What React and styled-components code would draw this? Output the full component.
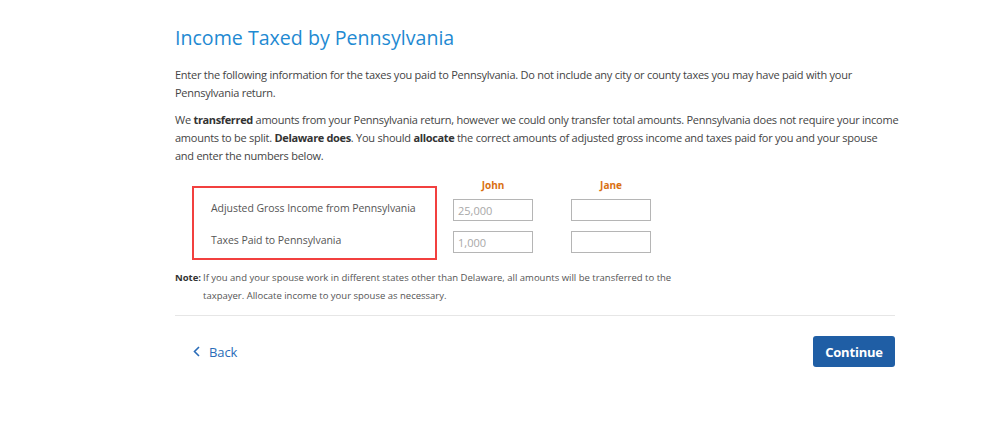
import React from 'react';
import styled, { createGlobalStyle } from 'styled-components';

const GlobalStyle = createGlobalStyle`
  html, body {
    margin: 0;
    padding: 0;
    background: #ffffff;
  }
`;

const Page = styled.div`
  width: 720px;
  padding: 24px 0 0 175px;
`;

const Title = styled.h1`
  margin: 0 0 14px;
  font-family: "Open Sans", sans-serif;
  font-weight: 400;
  font-size: 19.6px;
  line-height: 28px;
  color: #1f8ad2;
`;

const Para = styled.p`
  margin: 0 0 9px;
  font-family: "Open Sans", sans-serif;
  font-size: 11px;
  letter-spacing: -0.25px;
  line-height: 18px;
  color: #444;
  white-space: nowrap;

  b {
    font-weight: 700;
    color: #333;
    letter-spacing: -0.35px;
  }
`;

const FormArea = styled.div`
  display: flex;
  align-items: flex-end;
  margin: 14px 0 0 17px;
`;

const LabelBox = styled.div`
  width: 245px;
  height: 74px;
  box-sizing: border-box;
  border: 2px solid #f2403f;
  padding: 11px 0 0 17px;
  display: flex;
  flex-direction: column;
  gap: 14px;
`;

const RowLabel = styled.div`
  font-family: "Open Sans", sans-serif;
  font-size: 10.5px;
  letter-spacing: -0.05px;
  line-height: 18px;
  color: #555;
`;

const Column = styled.div`
  display: flex;
  flex-direction: column;
  align-items: center;
  gap: 10px;
  width: 80px;
  margin-left: ${p => p.$gap}px;
  padding-bottom: 7px;
`;

const PersonName = styled.div`
  font-family: "Open Sans", sans-serif;
  font-weight: 700;
  font-size: 10px;
  line-height: 12px;
  color: #d97011;
  margin-bottom: -2px;
`;

const Field = styled.input`
  width: 80px;
  height: 22px;
  box-sizing: border-box;
  border: 1px solid #b5b5b5;
  padding: 0 4px;
  font-family: "Open Sans", sans-serif;
  font-size: 11px;
  color: #555;
  outline: none;

  &::placeholder {
    color: #a8a8a8;
  }
`;

const Note = styled.div`
  display: flex;
  margin-top: 9px;
  font-family: "Open Sans", sans-serif;
  font-size: 9.5px;
  line-height: 18px;
  color: #555;
`;

const NoteTag = styled.span`
  font-weight: 700;
  color: #333;
  width: 28px;
  flex-shrink: 0;
`;

const Divider = styled.hr`
  margin: 10px 0 0;
  border: none;
  border-top: 1px solid #e6e6e6;
`;

const Footer = styled.div`
  display: flex;
  align-items: center;
  justify-content: space-between;
  padding: 20px 0 0 18px;
`;

const BackLink = styled.a`
  display: flex;
  align-items: center;
  gap: 9px;
  font-family: "Open Sans", sans-serif;
  font-size: 13px;
  letter-spacing: -0.1px;
  color: #2a6cb8;
  text-decoration: none;
  cursor: pointer;
`;

const ContinueButton = styled.button`
  width: 82px;
  height: 31px;
  border: none;
  border-radius: 3px;
  background: #1f5ea5;
  color: #fff;
  font-family: "Open Sans", sans-serif;
  font-weight: 700;
  font-size: 13px;
  letter-spacing: -0.2px;
  cursor: pointer;
`;

const Chevron = () => (
  <svg width="7" height="11" viewBox="0 0 7 11" fill="none">
    <path d="M6 1L1.5 5.5L6 10" stroke="#2a6cb8" strokeWidth="1.6" />
  </svg>
);

export default function App() {
  const people = [
    { name: 'John', gap: 16, values: ['25,000', '1,000'] },
    { name: 'Jane', gap: 38, values: ['', ''] },
  ];

  return (
    <>
      <GlobalStyle />
      <Page>
        <Title>Income Taxed by Pennsylvania</Title>
        <Para>
          Enter the following information for the taxes you paid to Pennsylvania. Do not include any city or county taxes you may have paid with your<br />
          Pennsylvania return.
        </Para>
        <Para>
          We <b>transferred</b> amounts from your Pennsylvania return, however we could only transfer total amounts. Pennsylvania does not require your income<br />
          amounts to be split. <b>Delaware does</b>. You should <b>allocate</b> the correct amounts of adjusted gross income and taxes paid for you and your spouse<br />
          and enter the numbers below.
        </Para>

        <FormArea>
          <LabelBox>
            <RowLabel>Adjusted Gross Income from Pennsylvania</RowLabel>
            <RowLabel>Taxes Paid to Pennsylvania</RowLabel>
          </LabelBox>
          {people.map(person => (
            <Column key={person.name} $gap={person.gap}>
              <PersonName>{person.name}</PersonName>
              {person.values.map((v, i) => (
                <Field key={i} type="text" placeholder={v} />
              ))}
            </Column>
          ))}
        </FormArea>

        <Note>
          <NoteTag>Note:</NoteTag>
          <span>
            If you and your spouse work in different states other than Delaware, all amounts will be transferred to the<br />
            taxpayer. Allocate income to your spouse as necessary.
          </span>
        </Note>

        <Divider />

        <Footer>
          <BackLink>
            <Chevron />
            Back
          </BackLink>
          <ContinueButton>Continue</ContinueButton>
        </Footer>
      </Page>
    </>
  );
}
